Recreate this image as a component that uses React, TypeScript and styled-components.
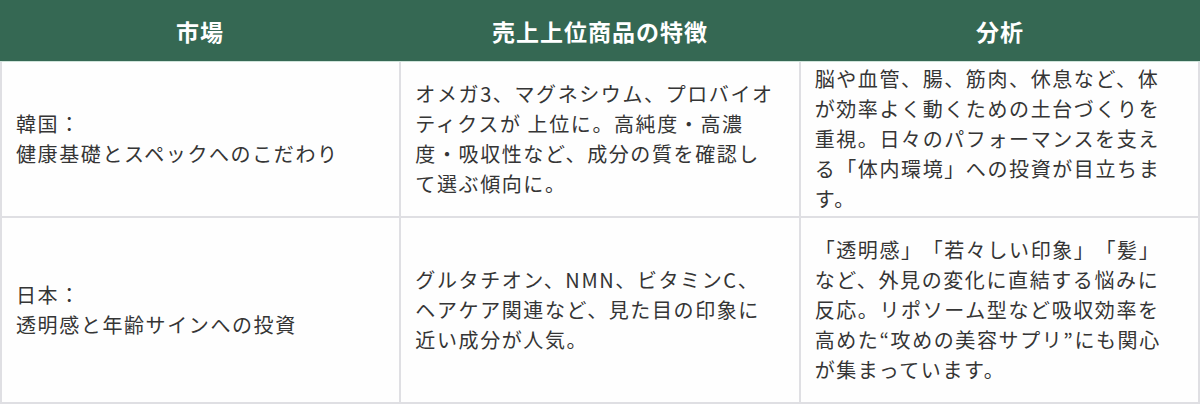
import styled, { createGlobalStyle } from "styled-components";

const GlobalStyle = createGlobalStyle`
  html, body {
    margin: 0;
    padding: 0;
    background: #ffffff;
  }
  body {
    font-family: "Noto Sans CJK JP", "Noto Sans", sans-serif;
    color: #333333;
  }
`;

const Wrapper = styled.div`
  width: 1200px;
  height: 406px;
  background: #ffffff;
`;

const HeaderRow = styled.div`
  display: grid;
  grid-template-columns: 1fr 1fr 1fr;
  height: 61px;
  background-color: #356853;
  border-bottom: 1px solid #cfe3da;
`;

const HeaderCell = styled.div`
  display: flex;
  align-items: center;
  justify-content: center;
  color: #ffffff;
  font-size: 23px;
  font-weight: 700;
  letter-spacing: 1px;
`;

const Body = styled.div`
  display: grid;
  grid-template-columns: 1fr 1fr 1fr;
  grid-template-rows: 154px 184px;
  gap: 2px;
  padding: 0 2px 2px 2px;
  background-color: #dfdfe3;
`;

const Cell = styled.div`
  display: flex;
  flex-direction: column;
  justify-content: center;
  padding: 0 14px;
  background-color: #fefefe;
  font-size: 20px;
  line-height: 30px;
  letter-spacing: 1.6px;
  color: #353535;
  text-spacing-trim: space-all;
  font-feature-settings: "halt" 0, "chws" 0;
`;

const Line = styled.span`
  white-space: nowrap;
`;

const rows: string[][][] = [
  [
    ["韓国：", "健康基礎とスペックへのこだわり"],
    [
      "オメガ3、マグネシウム、プロバイオ",
      "ティクスが 上位に。高純度・高濃",
      "度・吸収性など、成分の質を確認し",
      "て選ぶ傾向に。",
    ],
    [
      "脳や血管、腸、筋肉、休息など、体",
      "が効率よく動くための土台づくりを",
      "重視。日々のパフォーマンスを支え",
      "る「体内環境」への投資が目立ちま",
      "す。",
    ],
  ],
  [
    ["日本：", "透明感と年齢サインへの投資"],
    [
      "グルタチオン、NMN、ビタミンC、",
      "ヘアケア関連など、見た目の印象に",
      "近い成分が人気。",
    ],
    [
      "「透明感」「若々しい印象」「髪」",
      "など、外見の変化に直結する悩みに",
      "反応。リポソーム型など吸収効率を",
      "高めた“攻めの美容サプリ”にも関心",
      "が集まっています。",
    ],
  ],
];

export default function App() {
  return (
    <>
      <GlobalStyle />
      <Wrapper>
        <HeaderRow>
          <HeaderCell>市場</HeaderCell>
          <HeaderCell>売上上位商品の特徴</HeaderCell>
          <HeaderCell>分析</HeaderCell>
        </HeaderRow>
        <Body>
          {rows.map((row, r) =>
            row.map((lines, c) => (
              <Cell key={`${r}-${c}`}>
                {lines.map((line, i) => (
                  <Line key={i}>{line}</Line>
                ))}
              </Cell>
            ))
          )}
        </Body>
      </Wrapper>
    </>
  );
}
